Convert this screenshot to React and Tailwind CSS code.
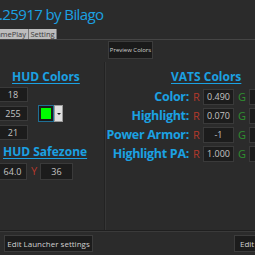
import React from 'react'

function Box({ value, className }) {
  return (
    <div className={"shrink-0 flex items-center justify-center bg-[#1c1c1c] border border-[#3a3a3a] text-[#c4c4c4] text-[9px] " + className}>
      {value}
    </div>
  )
}

const vats = [
  { label: 'Color:', r: '0.490' },
  { label: 'Highlight:', r: '0.070' },
  { label: 'Power Armor:', r: '-1' },
  { label: 'Highlight PA:', r: '1.000' },
]

export default function App() {
  return (
    <div className="w-[255px] h-[255px] overflow-hidden bg-[#2b2b2b] flex flex-col font-['Open_Sans',sans-serif]">
      {/* title */}
      <div className="h-[29px] shrink-0 flex items-center -ml-[1px]">
        <span className="text-[#1ba1e2] text-[15px] leading-none tracking-[-0.6px] whitespace-nowrap">.25917 by Bilago</span>
      </div>

      {/* tabs */}
      <div className="h-[11px] shrink-0 flex border-b border-[#454545] overflow-hidden">
        <div className="shrink-0 -ml-[11px] w-[40px] flex justify-center bg-[#bdbdbd] border-r border-[#7a7a7a] text-[#3a3a3a] text-[7.5px] leading-[10px] whitespace-nowrap">GamePlay</div>
        <div className="shrink-0 w-[28px] flex justify-center bg-[#bdbdbd] border-r border-[#7a7a7a] text-[#3a3a3a] text-[7.5px] leading-[10px]">Setting</div>
      </div>

      {/* toolbar */}
      <div className="h-[20px] shrink-0 flex items-start pt-[1px]">
        <div className="ml-[108px] w-[45px] h-[18px] flex items-center justify-center bg-[#1a1a1a] border border-[#3c3c3c] text-[#d0d0d0] text-[6px] whitespace-nowrap">Preview Colors</div>
      </div>

      {/* main */}
      <div className="h-[170px] shrink-0 flex">
        <div className="w-[104px] shrink-0 flex flex-col">
          <div className="mt-[10px] ml-[12px] text-[#1ba1e2] text-[12px] font-bold leading-[14px] underline underline-offset-[2px]">HUD Colors</div>
          <div className="mt-[3px] flex items-center gap-[10px]">
            <div className="shrink-0 flex flex-col gap-[4px] -ml-[6px]">
              <Box value="18" className="w-[34px] h-[15px] pl-[4px]" />
              <Box value="255" className="w-[34px] h-[15px] pl-[4px]" />
              <Box value="21" className="w-[34px] h-[15px] pl-[4px]" />
            </div>
            <div className="shrink-0 flex h-[17px]">
              <div className="w-[16px] h-[17px] border border-[#1f6f95] bg-[#1c1c1c] p-[2px]">
                <div className="w-full h-full bg-[#00ff00]"></div>
              </div>
              <div className="w-[9px] h-[17px] bg-[#e0e0e0] border border-[#9a9a9a] flex items-center justify-center">
                <div className="w-0 h-0 border-l-[2px] border-r-[2px] border-t-[2px] border-l-transparent border-r-transparent border-t-[#202020]"></div>
              </div>
            </div>
          </div>
          <div className="mt-[5px] ml-[3px] text-[#1ba1e2] text-[12px] font-bold leading-[14px] underline underline-offset-[2px] whitespace-nowrap">HUD Safezone</div>
          <div className="mt-[4px] flex items-center">
            <Box value="64.0" className="w-[33px] h-[17px] pl-[4px] -ml-[6px]" />
            <span className="shrink-0 ml-[4px] w-[8px] text-[#b3392b] text-[11px]">Y</span>
            <Box value="36" className="ml-[1px] w-[33px] h-[17px]" />
          </div>
        </div>

        <div className="shrink-0 w-[2px] mt-[2px] border-l border-[#232323] bg-[#363636]"></div>

        <div className="shrink-0 w-[200px] flex flex-col">
          <div className="mt-[10px] ml-[65px] text-[#1ba1e2] text-[12px] font-bold leading-[14px] underline underline-offset-[2px] whitespace-nowrap">VATS Colors</div>
          <div className="mt-[5px] flex flex-col gap-[3px]">
            {vats.map((v) => (
              <div key={v.label} className="flex items-center h-[16px]">
                <span className="shrink-0 w-[83px] text-right text-[#1ba1e2] text-[12.5px] font-bold tracking-[-0.3px] whitespace-nowrap">{v.label}</span>
                <span className="shrink-0 ml-[4px] w-[8px] text-[#b3392b] text-[11px]">R</span>
                <Box value={v.r} className="ml-[2px] w-[31px] h-[16px]" />
                <span className="shrink-0 ml-[4px] w-[9px] text-[#2f8f2f] text-[11px]">G</span>
                <Box value="" className="ml-[2px] w-[31px] h-[16px]" />
              </div>
            ))}
          </div>
        </div>
      </div>

      {/* bottom */}
      <div className="shrink-0 border-t border-[#1f1f1f] h-[2px] bg-[#3a3a3a]"></div>
      <div className="flex justify-between pt-[3px]">
        <div className="shrink-0 ml-[4px] w-[89px] h-[17px] flex items-center justify-center bg-[#1c1c1c] border border-[#3c3c3c] text-[#d0d0d0] text-[8px] whitespace-nowrap">Edit Launcher settings</div>
        <div className="shrink-0 -mr-[14px] w-[35px] h-[17px] flex items-center pl-[5px] bg-[#1c1c1c] border border-[#3c3c3c] text-[#d0d0d0] text-[8px]">Edit</div>
      </div>
    </div>
  )
}
